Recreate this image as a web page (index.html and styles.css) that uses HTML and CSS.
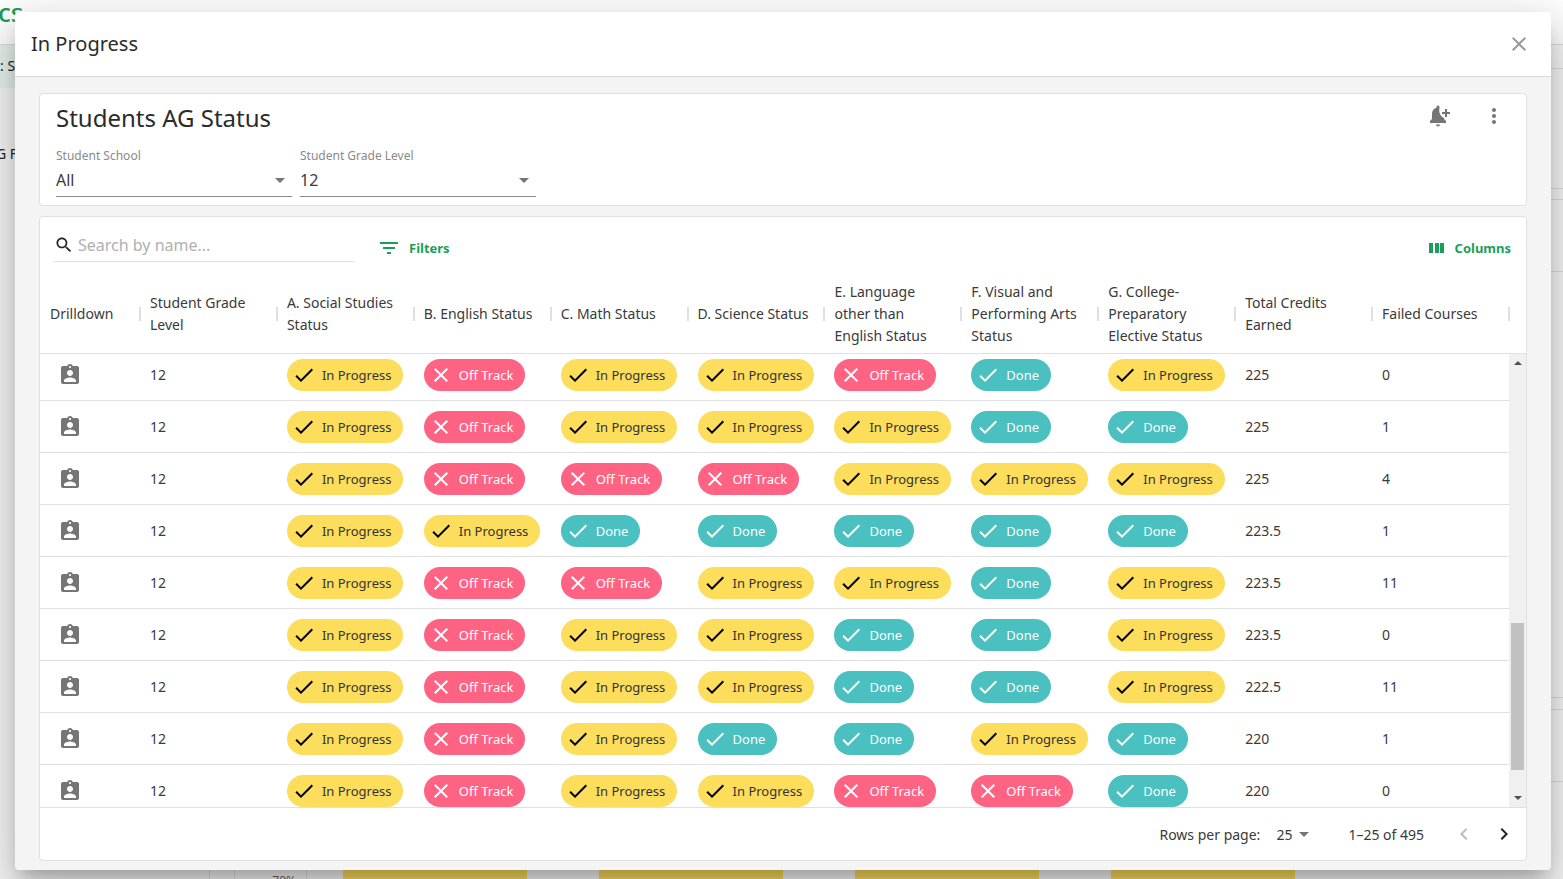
FILE: index.html
```html
<!DOCTYPE html>
<html lang="en">
<head>
    <meta charset="UTF-8">
    <meta name="viewport" content="width=device-width, initial-scale=1.0">
    <title>Students AG Status</title>
    <link rel="stylesheet" href="styles.css">
</head>
<body>
    <svg class="sprite" aria-hidden="true">
        <symbol id="icon-check" viewBox="0 0 24 24"><path d="M9 16.17 4.83 12l-1.42 1.41L9 19 21 7l-1.41-1.41z"/></symbol>
        <symbol id="icon-close" viewBox="0 0 24 24"><path d="M19 6.41 17.59 5 12 10.59 6.41 5 5 6.41 10.59 12 5 17.59 6.41 19 12 13.41 17.59 19 19 17.59 13.41 12z"/></symbol>
        <symbol id="icon-student" viewBox="0 0 24 24"><path d="M19 3h-4.18C14.4 1.84 13.3 1 12 1c-1.3 0-2.4.84-2.82 2H5c-1.1 0-2 .9-2 2v14c0 1.1.9 2 2 2h14c1.1 0 2-.9 2-2V5c0-1.1-.9-2-2-2zm-7 0c.55 0 1 .45 1 1s-.45 1-1 1-1-.45-1-1 .45-1 1-1zm0 4c1.66 0 3 1.34 3 3s-1.34 3-3 3-3-1.34-3-3 1.34-3 3-3zm6 12H6v-1.4c0-2 4-3.1 6-3.1s6 1.1 6 3.1V19z"/></symbol>
    </svg>

    <!-- Dashboard behind the dialog -->
    <div class="dashboard" aria-hidden="true">
        <div class="topbar"><span class="brand">cs</span></div>
        <div class="dashboard-body">
            <div class="sidebar">
                <div class="side-item active">: S</div>
                <div class="side-item">G F</div>
            </div>
            <div class="cards">
                <div class="card card-small"></div>
                <div class="card card-large"><div class="card-head"></div></div>
                <div class="card card-chart">
                    <div class="card-head"></div>
                    <div class="chart">
                        <div class="axis">70%</div>
                        <div class="bars"><i></i><i></i><i></i><i></i></div>
                    </div>
                </div>
            </div>
        </div>
    </div>

    <div class="dialog" role="dialog" aria-labelledby="dialog-title">
        <header class="dialog-header">
            <h1 id="dialog-title">In Progress</h1>
            <button class="icon-button close" aria-label="Close"><svg class="icon"><use href="#icon-close"/></svg></button>
        </header>

        <main class="dialog-body">
            <section class="panel summary">
                <div class="summary-head">
                    <h2>Students AG Status</h2>
                    <div class="actions">
                        <button class="icon-button" aria-label="Add alert">
                            <svg class="icon" viewBox="0 0 24 24"><path d="M10 20.500h4a2 2 0 0 1-4 0zM20 17v2H4v-2l2-2v-5c0-3.100 1.600-5.500 4.500-6.200V3a1.500 1.500 0 0 1 3 0v.8C12.600 8 14 12.300 18 14v1zM19 5h2v3h3v2h-3v3h-2v-3h-3V8h3z"/></svg>
                        </button>
                        <button class="icon-button" aria-label="More">
                            <svg class="icon" viewBox="0 0 24 24"><path d="M12 8c1.100 0 2-.9 2-2s-.9-2-2-2-2 .9-2 2 .9 2 2 2zm0 2c-1.100 0-2 .9-2 2s.9 2 2 2 2-.9 2-2-.9-2-2-2zm0 6c-1.100 0-2 .9-2 2s.9 2 2 2 2-.9 2-2-.9-2-2-2z"/></svg>
                        </button>
                    </div>
                </div>
                <div class="fields">
                    <div class="field">
                        <label for="school">Student School</label>
                        <select id="school"><option>All</option></select>
                    </div>
                    <div class="field">
                        <label for="grade">Student Grade Level</label>
                        <select id="grade"><option>12</option></select>
                    </div>
                </div>
            </section>

            <section class="panel grid">
                <div class="toolbar">
                    <div class="search">
                        <svg class="icon-small" viewBox="0 0 24 24"><path d="M15.500 14h-.79l-.28-.27C15.410 12.590 16 11.110 16 9.500 16 5.910 13.090 3 9.500 3S3 5.910 3 9.500 5.910 16 9.500 16c1.610 0 3.090-.59 4.230-1.570l.27.28v.79l5 4.990L20.490 19l-4.990-5zm-6 0C7.010 14 5 11.990 5 9.500S7.010 5 9.500 5 14 7.010 14 9.500 11.990 14 9.500 14z"/></svg>
                        <input type="text" placeholder="Search by name..." aria-label="Search by name">
                    </div>
                    <button class="text-button">
                        <svg class="icon" viewBox="0 0 24 24"><path d="M10 18h4v-2h-4v2zM3 6v2h18V6H3zm3 7h12v-2H6v2z"/></svg>
                        Filters
                    </button>
                    <button class="text-button columns">
                        <svg class="icon-small" viewBox="0 0 20 20"><path d="M2 5h4v10H2zM8 5h4v10H8zM13 5h4v10h-4z"/></svg>
                        Columns
                    </button>
                </div>

                <div class="table-head">
                    <table>
                        <thead>
                            <tr>
                                <th class="col-drill">Drilldown</th>
                                <th>Student Grade Level</th>
                                <th>A. Social Studies Status</th>
                                <th>B. English Status</th>
                                <th>C. Math Status</th>
                                <th>D. Science Status</th>
                                <th>E. Language other than English Status</th>
                                <th>F. Visual and Performing Arts Status</th>
                                <th>G. College-Preparatory Elective Status</th>
                                <th>Total Credits Earned</th>
                                <th>Failed Courses</th>
                            </tr>
                        </thead>
                    </table>
                </div>

                <div class="table-body">
                    <div class="viewport">
                        <table>
                            <tbody id="rows"></tbody>
                        </table>
                    </div>
                    <div class="scrollbar" aria-hidden="true">
                        <span class="arrow up"></span>
                        <span class="track"><span class="thumb"></span></span>
                        <span class="arrow down"></span>
                    </div>
                </div>

                <footer class="pagination">
                    <label for="page-size">Rows per page:</label>
                    <select id="page-size"><option>25</option></select>
                    <span class="range">1–25 of 495</span>
                    <button class="icon-button" aria-label="Previous page" disabled>
                        <svg class="icon" viewBox="0 0 24 24"><path d="M15.410 7.410 14 6l-6 6 6 6 1.410-1.410L10.830 12z"/></svg>
                    </button>
                    <button class="icon-button next" aria-label="Next page">
                        <svg class="icon" viewBox="0 0 24 24"><path d="M10 6 8.590 7.410 13.170 12l-4.580 4.590L10 18l6-6z"/></svg>
                    </button>
                </footer>
            </section>
        </main>
    </div>

    <script src="script.js"></script>
</body>
</html>
```
FILE: styles.css
```css
* {
    box-sizing: border-box;
}

body {
    margin: 0;
    height: 100vh;
    overflow: hidden;
    font-family: "Noto Sans", sans-serif;
    font-size: 13px;
    color: #3a3a3a;
    display: flex;
}

h1, h2 {
    margin: 0;
    font-weight: 400;
    color: #2b2b2b;
}

button, input, select {
    font: inherit;
    color: inherit;
    border: 0;
    padding: 0;
    background: none;
    outline: none;
}

.sprite {
    position: absolute;
    width: 0;
    height: 0;
}

.icon {
    width: 24px;
    height: 24px;
    flex: none;
    fill: currentColor;
}

.icon-small {
    width: 20px;
    height: 20px;
    flex: none;
    fill: currentColor;
}

/* Dashboard behind the dialog */
.dashboard {
    position: absolute;
    inset: 0;
    overflow: hidden;
    display: flex;
    flex-direction: column;
    background: #f7f7f7;
    color: #222;
}

.topbar {
    height: 45px;
    flex: none;
    background: #fff;
    border-bottom: 1px solid #ddd;
}

.brand {
    display: block;
    margin-left: -2px;
    font-size: 26px;
    line-height: 24px;
    font-weight: 500;
    color: #1b9e5a;
}

.dashboard-body {
    flex: 1;
    display: flex;
    min-height: 0;
}

.sidebar {
    width: 210px;
    flex: none;
    border-right: 1px solid #ddd;
}

.side-item {
    height: 43px;
    line-height: 42px;
    margin-bottom: 45px;
    font-size: 14px;
    text-indent: -4px;
}

.side-item.active {
    background: #e6f3ec;
    text-indent: 0;
}

.cards {
    flex: 1;
    padding: 23px 0 0 24px;
    margin-right: -24px;
    display: flex;
    flex-direction: column;
    gap: 10px;
}

.card {
    flex: none;
    border: 1px solid #ddd;
}

.card-small {
    height: 121px;
}

.card-large {
    height: 499px;
}

.card-head {
    height: 72px;
    border-bottom: 1px solid #ddd;
}

.card-chart {
    height: 400px;
    margin-top: 1px;
}

.chart {
    display: flex;
    height: 300px;
}

.axis {
    width: 72px;
    padding: 90px 10px 0 0;
    text-align: right;
    font-size: 12px;
    color: #666;
    border-right: 1px solid #ddd;
}

.bars {
    flex: 1;
    display: flex;
    gap: 72px;
    padding: 40px 0 0 36px;
}

.bars i {
    width: 184px;
    background: #fddd5c;
}

/* Dialog */
.dialog {
    position: relative;
    flex: 1;
    min-width: 0;
    margin: 12px 12px 9px 15px;
    display: flex;
    flex-direction: column;
    background: #f4f4f4;
    border-radius: 4px;
    box-shadow: 0 11px 15px -7px rgba(0, 0, 0, .2), 0 24px 38px 3px rgba(0, 0, 0, .14), 0 9px 46px 8px rgba(0, 0, 0, .12);
}

.dialog-header {
    height: 65px;
    padding: 0 20px 0 16px;
    display: flex;
    align-items: center;
    justify-content: space-between;
    background: #fff;
    border-bottom: 1px solid #d9dbda;
    border-radius: 4px 4px 0 0;
}

h1 {
    font-size: 20px;
    line-height: 28px;
}

.icon-button {
    display: flex;
    color: #757575;
}

.close {
    color: #999;
}

.dialog-body {
    flex: 1;
    min-height: 0;
    padding: 16px 24px 9px;
    display: flex;
    flex-direction: column;
    gap: 10px;
}

.panel {
    background: #fff;
    border: 1px solid #e0e0e0;
    border-radius: 4px;
}

.summary {
    padding: 8px 20px 8px 16px;
}

.summary-head {
    display: flex;
    justify-content: space-between;
    align-items: flex-start;
}

h2 {
    font-size: 24px;
    line-height: 32px;
}

.actions {
    display: flex;
    gap: 32px;
    padding-top: 2px;
}

.fields {
    display: flex;
    gap: 8px;
    margin-top: 14px;
}

.field {
    width: 236px;
    display: flex;
    flex-direction: column;
}

.field label {
    font-size: 12px;
    line-height: 16px;
    color: #8a8a8a;
}

select {
    appearance: none;
    background: url("data:image/svg+xml,%3Csvg xmlns='http://www.w3.org/2000/svg' viewBox='0 0 10 5'%3E%3Cpath fill='%23757575' d='M0 0h10L5 5z'/%3E%3C/svg%3E") no-repeat right 7px center / 10px 5px;
}

.field select {
    height: 33px;
    font-size: 16px;
    border-bottom: 1px solid #8c8c8c;
}

/* Student table */
.grid {
    flex: 1;
    min-height: 0;
    display: flex;
    flex-direction: column;
}

.toolbar {
    display: flex;
    align-items: flex-start;
    padding: 12px 15px 0 14px;
    height: 58px;
    flex: none;
}

.search {
    width: 300px;
    height: 33px;
    display: flex;
    align-items: center;
    gap: 4px;
    color: #222;
    border-bottom: 1px solid #e0e0e0;
}

.search input {
    flex: 1;
    min-width: 0;
    font-size: 16px;
}

.search input::placeholder {
    color: #b0b0b0;
}

.text-button {
    display: flex;
    align-items: center;
    gap: 8px;
    height: 38px;
    margin-left: 23px;
    font-weight: 700;
    color: #1b9e5a;
}

.text-button.columns {
    margin-left: auto;
}

.table-head {
    flex: none;
    border-bottom: 1px solid #e0e0e0;
}

table {
    width: 100%;
    table-layout: fixed;
    border-collapse: separate;
    border-spacing: 0;
}

.table-head table {
    width: calc(100% - 17px);
}

th {
    position: relative;
    height: 78px;
    padding: 0 12px 0 10px;
    font-size: 14px;
    line-height: 22px;
    font-weight: 400;
    text-align: left;
}

/* column separators */
th::after {
    content: "";
    position: absolute;
    right: -1px;
    top: 32px;
    width: 2px;
    height: 14px;
    background: #e0e0e0;
}

.col-drill {
    width: 100px;
}

.table-body {
    flex: 1;
    min-height: 0;
    display: flex;
}

.viewport {
    flex: 1;
    overflow: hidden;
}

.viewport table {
    margin-top: -5px;
}

td {
    height: 52px;
    padding: 0 10px;
    border-bottom: 1px solid #e0e0e0;
    font-size: 14px;
}

td .icon-button {
    margin-left: 8px;
}

.chip {
    display: inline-flex;
    align-items: center;
    height: 32px;
    padding: 0 12px 0 5px;
    gap: 6px;
    border-radius: 16px;
    font-size: 13px;
    white-space: nowrap;
    vertical-align: middle;
}

.chip.progress {
    background: #fddd5c;
    color: #333;
}

.chip.progress .icon {
    color: #000;
}

.chip.off {
    background: #ff6384;
    color: #fff;
}

.chip.done {
    background: #4bc0c0;
    color: #fff;
}

.scrollbar {
    width: 17px;
    display: flex;
    flex-direction: column;
    align-items: center;
    background: #f0f0f0;
}

.track {
    flex: 1;
    width: 13px;
    display: flex;
    flex-direction: column;
    justify-content: flex-end;
    padding-bottom: 19px;
}

.thumb {
    height: 37%;
    background: #c1c1c1;
}

.arrow {
    margin: 7px 0;
    border: 4px solid transparent;
}

.arrow.up {
    border-top: 0;
    border-bottom-color: #505050;
}

.arrow.down {
    border-bottom: 0;
    border-top-color: #505050;
}

.pagination {
    height: 53px;
    flex: none;
    display: flex;
    align-items: center;
    justify-content: flex-end;
    padding-right: 10px;
    border-top: 1px solid #e0e0e0;
    font-size: 14px;
}

.pagination select {
    width: 40px;
    margin: 0 32px 0 16px;
}

.range {
    margin-right: 28px;
}

.pagination .icon-button:disabled {
    color: #bdbdbd;
}

.pagination .next {
    margin-left: 16px;
    color: #222;
}
```
FILE: script.js
```js
// one letter per status column: p = in progress, o = off track, d = done
const students = [
    ["poppodp", 225, 0],
    ["popppdd", 225, 1],
    ["poooppp", 225, 4],
    ["ppddddd", 223.5, 1],
    ["pooppdp", 223.5, 11],
    ["poppddp", 223.5, 0],
    ["poppddp", 222.5, 11],
    ["popddpd", 220, 1],
    ["poppood", 220, 0]
];

const chips = {
    p: '<span class="chip progress"><svg class="icon"><use href="#icon-check"/></svg>In Progress</span>',
    o: '<span class="chip off"><svg class="icon"><use href="#icon-close"/></svg>Off Track</span>',
    d: '<span class="chip done"><svg class="icon"><use href="#icon-check"/></svg>Done</span>'
};

document.getElementById("rows").innerHTML = students.map(([statuses, credits, failed]) => `
    <tr>
        <td class="col-drill"><button class="icon-button" aria-label="Open student"><svg class="icon"><use href="#icon-student"/></svg></button></td>
        <td>12</td>
        ${[...statuses].map(s => `<td>${chips[s]}</td>`).join("")}
        <td>${credits}</td>
        <td>${failed}</td>
    </tr>`).join("");
```
